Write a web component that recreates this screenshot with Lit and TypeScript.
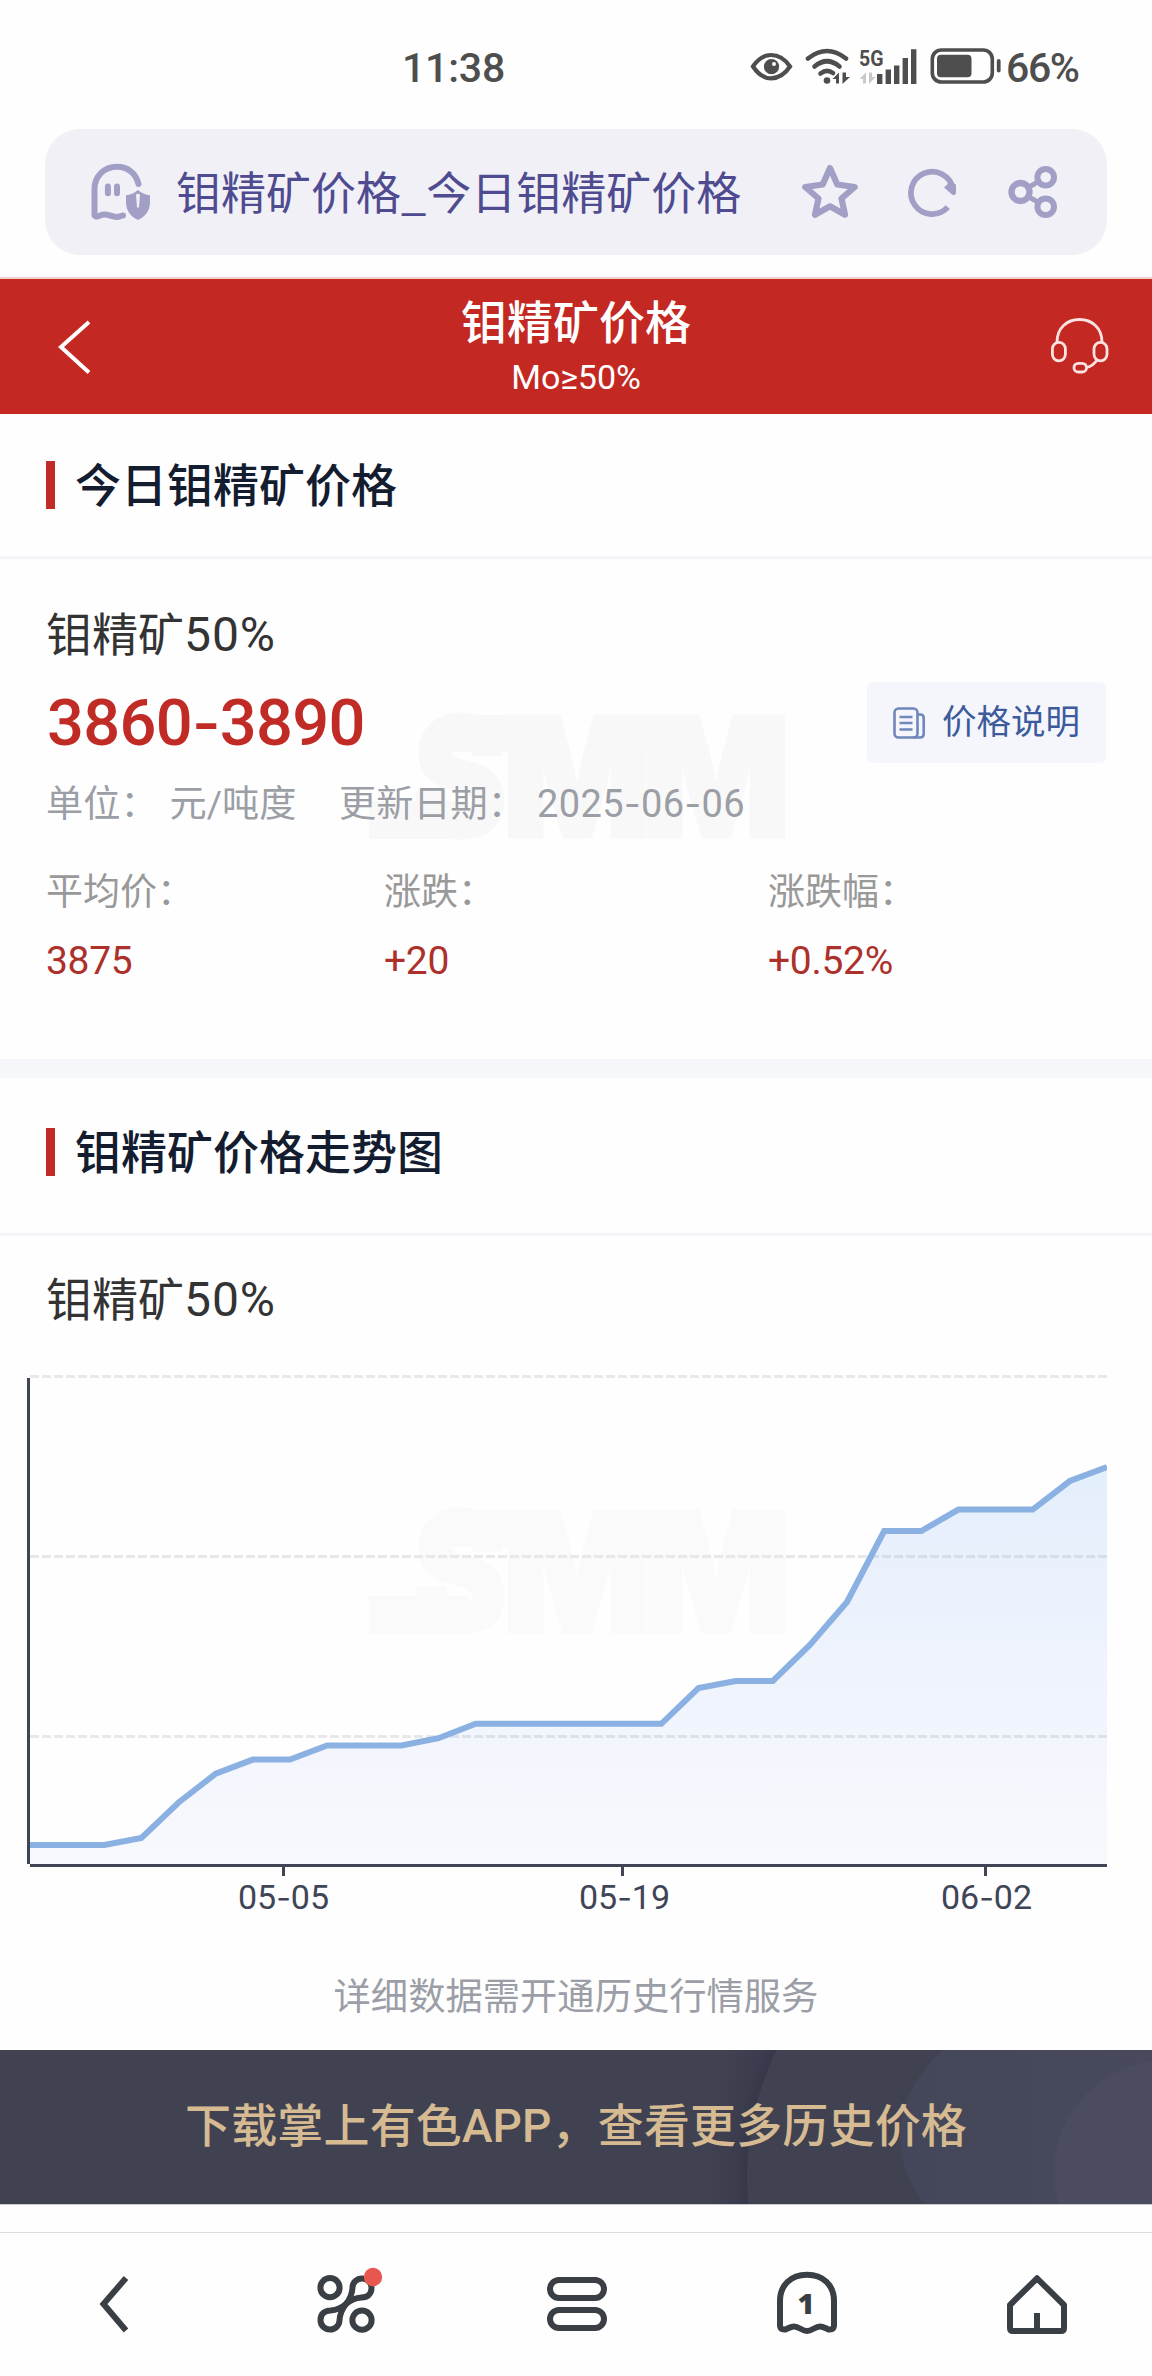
import { LitElement, html, svg, css } from "lit";
import { customElement, property } from "lit/decorators.js";

const dashed = (text: string) =>
  text.split("-").map((part, i) => (i ? html`<span class="dash">-</span>${part}` : part));

const watermark = (x: number, y: number) => svg`
  <g transform="translate(${x} ${y})" fill="currentColor" stroke="currentColor"
     font-family="Inter, sans-serif" font-weight="900" font-size="164">
    <rect x="0" y="86" width="100" height="38" stroke="none" />
    <rect x="76" y="0" width="70" height="37" stroke="none" />
    <rect x="260" y="0" width="30" height="37" stroke="none" />
    <text x="45" y="121" stroke-width="5" textLength="92" lengthAdjust="spacingAndGlyphs">S</text>
    <text x="134" y="121" stroke-width="5" textLength="148" lengthAdjust="spacingAndGlyphs">M</text>
    <text x="273" y="121" stroke-width="5" textLength="148" lengthAdjust="spacingAndGlyphs">M</text>
  </g>`;

@customElement("status-bar")
class StatusBar extends LitElement {
  static styles = css`
    :host { display: block; color: #4e4e4e; font-family: Roboto, sans-serif; }
    .bar { box-sizing: border-box; height: 129px; padding: 6px 71px 0 402px; display: flex; align-items: center; }
    .time { font-size: 41px; font-weight: 500; letter-spacing: -0.2px; flex: 1; }
    .icons { display: block; margin-top: -1px; }
    .level { font-size: 41px; font-weight: 500; width: 75px; margin-left: 3px; letter-spacing: -1.4px; white-space: nowrap; }
    .net { font: 700 22px Roboto, sans-serif; }
  `;
  render() {
    return html`<div class="bar">
      <div class="time">11:38</div>
      <svg class="icons" width="254" height="40" viewBox="749 47 254 40" fill="none" stroke="currentColor">
        <path d="M753 66.500C758 59 764 55 771 55S785 59 790 66.500C785 74 778 78.300 771 78.300S758 74 753 66.500Z" stroke-width="4.200" />
        <ellipse cx="771.500" cy="66.700" rx="7.600" ry="7.600" fill="currentColor" stroke="none" />
        <circle cx="774" cy="64" r="2" fill="#fefefe" stroke="none" />
        <g stroke-width="4.600" stroke-linecap="round">
          <path d="M808 58.500Q827 43.500 846 58.500" />
          <path d="M814.500 66.500Q827 56 839.500 66.500" />
          <path d="M820.500 73.500Q827 68.500 833 73" />
        </g>
        <circle cx="827" cy="80.500" r="3.300" fill="currentColor" stroke="none" />
        <path d="M839 72.500V83.500H836V79H832.500ZM842.500 72.500V84L850 77H846V72.500Z" fill="currentColor" stroke="none" />
        <path d="M866 72.500V83.500H863V79H859.500ZM869 72.500V84L875.500 77H872V72.500Z" fill="#c9c9c9" stroke="none" />
        <text class="net" x="859" y="66" fill="currentColor" stroke="none" textLength="24.500" lengthAdjust="spacingAndGlyphs">5G</text>
        <g stroke-width="5.400" stroke-linecap="butt">
          <path d="M879.700 74V84M888.300 69.500V84M896.700 65.500V84M905.300 58V84M913.700 49.300V84" />
        </g>
        <rect x="932.300" y="50" width="60" height="32" rx="9" stroke-width="3.600" />
        <rect x="937" y="54.700" width="34.500" height="22.600" rx="4" fill="currentColor" stroke="none" />
        <path d="M998.700 61V70.500" stroke-width="3.800" stroke-linecap="round" />
      </svg>
      <div class="level">66%</div>
    </div>`;
  }
}

@customElement("address-bar")
class AddressBar extends LitElement {
  static styles = css`
    :host { display: block; font-family: "Noto Sans CJK SC", sans-serif; }
    .bar { box-sizing: border-box; height: 126px; margin: 0 45px 22px; padding: 0 48px 0 45px; border-radius: 35px;
      background: #f1f0f6; color: #a19fc6; display: flex; align-items: center; }
    .text { flex: 1; margin-left: 25px; font-size: 45px; line-height: 60px; color: #4f4b90; white-space: nowrap; padding-bottom: 3px; }
    .tools { display: block; }
  `;
  render() {
    return html`<div class="bar">
      <svg width="61" height="60" viewBox="90 161 61 60" fill="none" stroke="currentColor" stroke-width="6" stroke-linecap="round" stroke-linejoin="round">
        <path d="M138.500 183C136 172 127.500 165.800 117 165.800C104 165.800 94.500 175.500 94.500 188V213C94.500 216 97 216.300 100 214.500C107 211.500 110.500 216 116.500 216C120 216 121.500 214.500 123 214.500" />
        <path d="M107.900 185.500V192.300M117 185.500V192.300" />
        <path d="M138 189C142 192.300 146 194 150 194.300V201C150 209.500 145.500 215.500 138 219C130.500 215.500 126 209.500 126 201V194.300C130 194 134 192.300 138 189Z" fill="currentColor" stroke="none" />
        <path d="M136 193.500Q138 191.800 140 193.500L139 206.500H137Z" fill="#f1f0f6" stroke="none" />
      </svg>
      <div class="text">钼精矿价格_今日钼精矿价格</div>
      <svg class="tools" width="258" height="56" viewBox="802 164 258 56" fill="none" stroke="currentColor" stroke-linejoin="round">
        <path d="M831 168L838.300 184.500L855.800 187L842.500 198.500L846 214.700L831 206.300L816 214.700L819.500 198.500L806.200 187L823.700 184.500Z" stroke-width="6.200" />
        <path d="M948.800 207.200A21.200 21.200 0 1 1 954 189" stroke-width="5.700" />
        <path d="M957 184.500V192.500Q956.500 196.500 953 194.500L945 187.500L950.500 182Z" fill="currentColor" stroke="none" />
        <circle cx="1021.500" cy="192" r="9" stroke-width="6.300" />
        <circle cx="1046.700" cy="177.300" r="8.300" stroke-width="6" />
        <circle cx="1046.700" cy="206.700" r="8.300" stroke-width="6" />
        <path d="M1030 187L1039 181.800M1030 197L1039 202.200" stroke-width="5" />
      </svg>
    </div>`;
  }
}

@customElement("page-header")
class PageHeader extends LitElement {
  static styles = css`
    :host { display: block; color: #fff; font-family: Roboto, "Noto Sans CJK SC", sans-serif; }
    .head { height: 135px; border-top: 2px solid #f6cfce; background: #c42822; display: grid; grid-template-columns: 200px 1fr 200px; align-items: center; }
    .back { padding-left: 57px; }
    .help { padding-left: 98px; }
    svg { display: block; }
    .titles { text-align: center; }
    .title { font-size: 46px; line-height: 56px; font-weight: 500; margin-top: 1px; }
    .sub { font-size: 34px; line-height: 44px; margin-top: 4px; letter-spacing: -0.1px; }
  `;
  render() {
    return html`<header class="head">
      <div class="back">
        <svg width="36" height="58" viewBox="57 318 36 58" fill="none" stroke="#fff" stroke-width="4"><path d="M89 322L61 347L89 372.500" /></svg>
      </div>
      <div class="titles">
        <div class="title">钼精矿价格</div>
        <div class="sub">Mo≥50%</div>
      </div>
      <div class="help">
        <svg width="60" height="60" viewBox="1050 317 60 60" fill="none" stroke="#fbe3e2" stroke-width="2.800">
          <path d="M1057 342C1057 328 1067 319.500 1079.500 319.500S1102 328 1102 342" />
          <rect x="1052.400" y="342.300" width="13" height="18.500" rx="6.500" />
          <rect x="1094" y="342.300" width="13" height="18.500" rx="6.500" />
          <rect x="1074" y="363.300" width="12.500" height="8.700" rx="4.300" />
          <path d="M1086.500 367.500C1091 366.500 1094.500 364 1097.500 359.500" />
        </svg>
      </div>
    </header>`;
  }
}

@customElement("section-title")
class SectionTitle extends LitElement {
  @property() text = "";
  static styles = css`
    :host { display: flex; align-items: center; box-sizing: border-box; border-bottom: 3px solid #f3f5f9; padding-left: 46px; }
    .mark { width: 9px; height: 48px; background: #c02b26; }
    .text { margin-left: 20px; padding-top: 2px; font: 500 46px/60px Roboto, "Noto Sans CJK SC", sans-serif; color: #141c30; }
  `;
  render() {
    return html`<div class="mark"></div><div class="text">${this.text}</div>`;
  }
}

@customElement("price-panel")
class PricePanel extends LitElement {
  static styles = css`
    :host { display: block; font-family: Roboto, "Noto Sans CJK SC", sans-serif; }
    .panel { position: relative; box-sizing: border-box; height: 500px; padding: 46px 46px 0; }
    .mark { position: absolute; left: 369px; top: 156px; color: #f8f8f8; overflow: visible; }
    .body { position: relative; }
    .name { font-size: 46px; line-height: 60px; color: #333; }
    .grade { font-size: 48px; line-height: 1; letter-spacing: 0.9px; }
    .row { display: flex; justify-content: space-between; align-items: center; margin-top: 17px; height: 81px; }
    .price { font-size: 65px; line-height: 81px; padding: 1px 0 0 1px; font-weight: 500; color: #c02b26; letter-spacing: -0.7px; }
    .dash { font-family: Inter, sans-serif; font-size: 0.95em; line-height: 1; }
    .explain { box-sizing: border-box; width: 239px; height: 81px; border-radius: 6px; background: #f4f6fb; color: #3c5a9c;
      display: flex; align-items: center; padding: 0 0 0 25px; gap: 16px; font-size: 34.500px; white-space: nowrap; }
    .explain-text { line-height: 40px; padding-bottom: 2px; }
    .meta { display: flex; margin-top: 16px; font-size: 37.200px; line-height: 50px; color: #9b9ea5; white-space: pre; }
    .unit { width: 293px; }
    .value { margin-left: 12px; }
    .date { font-size: 38px; letter-spacing: 0.4px; }
    .stats { display: grid; grid-template-columns: 338px 384px 1fr; margin-top: 39px; line-height: 50px; }
    .label { font-size: 37px; color: #999; }
    .num { margin-top: 18px; font-size: 39px; letter-spacing: -0.3px; color: #ad302b; }
  `;
  private stats = [
    ["平均价：", "3875"],
    ["涨跌：", "+20"],
    ["涨跌幅：", "+0.52%"],
  ];
  render() {
    return html`<section class="panel">
      <svg class="mark" width="416" height="124" viewBox="0 0 416 124">${watermark(0, 0)}</svg>
      <div class="body">
        <div class="name">钼精矿<span class="grade">50%</span></div>
        <div class="row">
          <div class="price">${dashed("3860-3890")}</div>
          <div class="explain">
            <svg width="34" height="34" viewBox="892 705 34 34" fill="none" stroke="#6f87bb" stroke-width="2.600">
              <rect x="894.500" y="707.500" width="23" height="29" rx="4" />
              <path d="M918 713.500H920.500Q923.700 713.500 923.700 717V733Q923.700 736.500 920 736.500H913" />
              <path d="M899.500 716H912.500M899.500 722H912.500M899.500 728.500H912.500" />
            </svg>
            <div class="explain-text">价格说明</div>
          </div>
        </div>
        <div class="meta">
          <div class="unit">单位：<span class="value">元/吨度</span></div>
          <div>更新日期：<span class="value date">${dashed("2025-06-06")}</span></div>
        </div>
        <div class="stats">
          ${this.stats.map(([label, num]) => html`<div><div class="label">${label}</div><div class="num">${num}</div></div>`)}
        </div>
      </div>
    </section>`;
  }
}

@customElement("trend-chart")
class TrendChart extends LitElement {
  static styles = css`
    :host { display: block; }
    svg { display: block; }
    .mark { color: #fafafa; }
    .grid { stroke: #e7e8ea; stroke-width: 3; stroke-dasharray: 9 3; }
    .axis { stroke: #404556; stroke-width: 3; }
    .line { fill: none; stroke: #8ab1e2; stroke-width: 6; }
    .tick { font: 34px Roboto, sans-serif; fill: #404556; text-anchor: middle; }
    .dash { font-family: Inter, sans-serif; font-size: 32px; }
  `;
  private levels = [
    1845, 1845, 1845, 1838, 1802.5, 1773.7, 1759.6, 1759.6, 1745.4, 1745.4, 1745.4, 1738.2, 1723.8, 1723.8, 1723.8,
    1723.8, 1723.8, 1723.8, 1688, 1681, 1681, 1645, 1602, 1531, 1531, 1509.6, 1509.6, 1509.6, 1481, 1467,
  ];
  private ticks: [number, number, string, string][] = [
    [283.5, 283.5, "05", "05"],
    [622.5, 624.5, "05", "19"],
    [985.5, 986.5, "06", "02"],
  ];
  render() {
    const step = 1077 / (this.levels.length - 1);
    const points = this.levels.map((y, i) => `${(30 + i * step).toFixed(1)},${y}`).join(" ");
    return html`<svg width="1152" height="590" viewBox="0 1330 1152 590">
      <defs>
        <linearGradient id="area" x1="0" y1="0" x2="0" y2="1">
          <stop offset="0" stop-color="rgb(50,135,240)" stop-opacity="0.13" />
          <stop offset="1" stop-color="rgb(80,110,230)" stop-opacity="0.035" />
        </linearGradient>
        <clipPath id="plot"><rect x="30" y="1375" width="1077" height="490" /></clipPath>
      </defs>
      <g class="mark">${watermark(369, 1510)}</g>
      <path class="grid" d="M30 1376.500H1107" /><path class="grid" d="M30 1556.500H1107" /><path class="grid" d="M30 1736.500H1107" />
      <g clip-path="url(#plot)">
        <polygon points="30,1864 ${points} 1107,1864" fill="url(#area)" />
        <polyline class="line" points="${points}" />
      </g>
      <path class="axis" d="M28.500 1378V1864M30 1865.500H1107" />
      ${this.ticks.map(
        ([x, center, month, day]) => svg`<path class="axis" d="M${x} 1867V1876" />
          <text class="tick" x=${center} y="1909">${month}<tspan class="dash">-</tspan>${day}</text>`,
      )}
    </svg>`;
  }
}

@customElement("download-banner")
class DownloadBanner extends LitElement {
  static styles = css`
    :host { display: block; }
    .banner { position: relative; height: 154px; background: #404252; overflow: hidden; border-bottom: 1px solid #c9c9d2; }
    .art { position: absolute; left: 0; top: 0; }
    .text { position: relative; text-align: center; font: 500 46px/152px Roboto, "Noto Sans CJK SC", sans-serif; letter-spacing: 0.15px; color: #d5ba92; white-space: nowrap; }
  `;
  render() {
    return html`<div class="banner">
      <svg class="art" width="1152" height="154" viewBox="0 2050 1152 154">
        <defs>
          <radialGradient id="shade" gradientUnits="userSpaceOnUse" cx="1040" cy="2178" r="335">
            <stop offset="0.874" stop-color="#36384a" />
            <stop offset="0.91" stop-color="#3b3d4e" />
            <stop offset="1" stop-color="#404252" />
          </radialGradient>
          <linearGradient id="fade" x1="0" x2="1"><stop offset="0" stop-color="#444759" /><stop offset="0.6" stop-color="#484a5b" /></linearGradient>
        </defs>
        <circle cx="1040" cy="2178" r="335" fill="url(#shade)" />
        <circle cx="1040" cy="2178" r="293" fill="#404252" />
        <ellipse cx="1100" cy="2137" rx="200" ry="140" fill="url(#fade)" />
        <circle cx="1165" cy="2172" r="111" fill="#4b4d5e" />
      </svg>
      <div class="text">下载掌上有色APP，查看更多历史价格</div>
    </div>`;
  }
}

@customElement("bottom-nav")
class BottomNav extends LitElement {
  static styles = css`
    :host { display: block; }
    .nav { box-sizing: border-box; height: 144px; border-top: 1px solid #dcdcdc; display: grid; grid-template-columns: repeat(5, 1fr); place-items: center; }
    svg { display: block; fill: none; stroke: #393f44; stroke-width: 6; stroke-linejoin: round; }
    .dot { fill: #e8574f; stroke: none; }
    .count { font: 800 29px "Open Sans", sans-serif; fill: #393f44; stroke: none; text-anchor: middle; }
    .sharp { stroke-linejoin: miter; }
  `;
  render() {
    const drop = "M346 2304C351 2297.500 352.300 2293 352.500 2287.500A9.500 9.300 0 0 1 371.500 2288C371.500 2294 367.500 2297.300 361.500 2297.500C355 2298 350.500 2300 346 2304Z";
    return html`<nav class="nav">
      <svg class="sharp" width="70" height="70" viewBox="80 2270 70 70"><path d="M126 2278L103.500 2304L126 2330.500" /></svg>
      <svg width="76" height="76" viewBox="308 2267 76 76">
        <circle cx="330" cy="2287.700" r="9.600" /><circle cx="362" cy="2320.200" r="9.600" />
        <path d=${drop} /><path d=${drop} transform="rotate(180 346 2304)" />
        <circle class="dot" cx="373" cy="2277" r="9.200" />
      </svg>
      <svg width="70" height="70" viewBox="541 2270 70 70">
        <rect x="550" y="2280" width="54" height="18" rx="9" /><rect x="550" y="2310" width="54" height="18" rx="9" />
      </svg>
      <svg width="70" height="76" viewBox="771 2267 70 76">
        <path d="M780 2301C780 2285 791 2274.700 807 2274.700S834 2285 834 2301V2326Q833.500 2330 828.500 2329.500C825 2328 823 2326.500 820 2326.500C815 2326.500 812 2331 807 2331S799 2326.500 794 2326.500C791 2326.500 789 2328 785.500 2329.500Q780.500 2330 780 2326Z" />
        <text class="count" x="806" y="2314">1</text>
      </svg>
      <svg width="70" height="76" viewBox="1002 2267 70 76">
        <path d="M1037 2278.300L1064 2305V2328Q1064 2331 1061 2331H1013Q1010 2331 1010 2328V2305ZM1037 2313V2331" />
      </svg>
    </nav>`;
  }
}

@customElement("app-root")
class AppRoot extends LitElement {
  static styles = css`
    :host { display: block; width: 1152px; background: #fefefe; overflow: hidden; }
    .first { height: 145px; }
    .band { height: 19px; background: #f6f7fa; }
    .second { height: 158px; padding-bottom: 7px; }
    .name { margin: 34px 0 0 46px; font: 46px/60px Roboto, "Noto Sans CJK SC", sans-serif; color: #333; }
    .grade { font-size: 48px; line-height: 1; letter-spacing: 0.9px; }
    .hint { margin: 52px 0 28px; text-align: center; font: 37.300px/50px Roboto, "Noto Sans CJK SC", sans-serif; color: #9b9ea6; }
    .space { height: 27px; }
  `;
  render() {
    return html`
      <status-bar></status-bar>
      <address-bar></address-bar>
      <page-header></page-header>
      <section-title class="first" text="今日钼精矿价格"></section-title>
      <price-panel></price-panel>
      <div class="band"></div>
      <section-title class="second" text="钼精矿价格走势图"></section-title>
      <div class="name">钼精矿<span class="grade">50%</span></div>
      <trend-chart></trend-chart>
      <div class="hint">详细数据需开通历史行情服务</div>
      <download-banner></download-banner>
      <div class="space"></div>
      <bottom-nav></bottom-nav>
    `;
  }
}
